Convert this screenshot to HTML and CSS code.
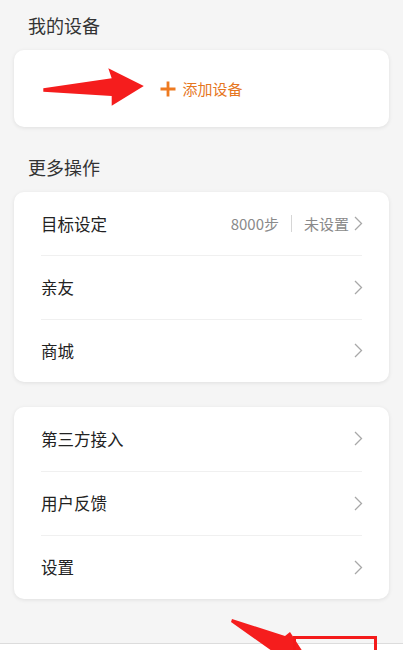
FILE: index.html
```html
<!DOCTYPE html>
<html lang="zh">
<head>
<meta charset="utf-8">
<link rel="stylesheet" href="styles.css">
</head>
<body>
<div class="page">
  <div class="section-title">我的设备</div>
  <div class="card card--add">
    <div class="add-btn">
      <svg class="plus" width="16" height="16" viewBox="0 0 16 16"><path d="M8 0.5V15.5M0.5 8H15.5" stroke="#ee7a20" stroke-width="2.8"/></svg>
      <span>添加设备</span>
    </div>
  </div>

  <div class="section-title">更多操作</div>
  <div class="card card--compact">
    <div class="row">
      <span class="label">目标设定</span>
      <span class="value">8000步</span>
      <span class="sep"></span>
      <span class="value">未设置</span>
      <svg class="chev" width="9" height="15" viewBox="0 0 9 15"><path d="M1 1L7.5 7.5L1 14" fill="none" stroke="#a8a8a8" stroke-width="1.3"/></svg>
    </div>
    <div class="row">
      <span class="label">亲友</span>
      <svg class="chev" width="9" height="15" viewBox="0 0 9 15"><path d="M1 1L7.5 7.5L1 14" fill="none" stroke="#a8a8a8" stroke-width="1.3"/></svg>
    </div>
    <div class="row">
      <span class="label">商城</span>
      <svg class="chev" width="9" height="15" viewBox="0 0 9 15"><path d="M1 1L7.5 7.5L1 14" fill="none" stroke="#a8a8a8" stroke-width="1.3"/></svg>
    </div>
  </div>

  <div class="card card--last">
    <div class="row">
      <span class="label">第三方接入</span>
      <svg class="chev" width="9" height="15" viewBox="0 0 9 15"><path d="M1 1L7.5 7.5L1 14" fill="none" stroke="#a8a8a8" stroke-width="1.3"/></svg>
    </div>
    <div class="row">
      <span class="label">用户反馈</span>
      <svg class="chev" width="9" height="15" viewBox="0 0 9 15"><path d="M1 1L7.5 7.5L1 14" fill="none" stroke="#a8a8a8" stroke-width="1.3"/></svg>
    </div>
    <div class="row">
      <span class="label">设置</span>
      <svg class="chev" width="9" height="15" viewBox="0 0 9 15"><path d="M1 1L7.5 7.5L1 14" fill="none" stroke="#a8a8a8" stroke-width="1.3"/></svg>
    </div>
  </div>

  <div class="tabbar"></div>

  <svg class="annotations" width="403" height="650" viewBox="0 0 403 650">
    <polygon fill="#f51d1d" points="43.3,88.3 111.7,78.3 108.3,68.3 143.8,86 111.7,105.7 111.7,96 43.3,91.7"/>
    <polygon fill="#f51d1d" points="232,619 285,636 290,632 316,672 264,668 272,651 231,622"/>
    <rect x="294.5" y="637.5" width="81" height="40" fill="none" stroke="#f41a1a" stroke-width="3"/>
  </svg>
</div>
</body>
</html>
```

FILE: styles.css
```css
html, body {
  margin: 0;
  padding: 0;
}
body {
  background: #f5f5f5;
  font-family: "Noto Sans CJK SC", "Noto Sans", sans-serif;
}
.page {
  position: relative;
  height: 650px;
  overflow: hidden;
  padding: 0 14px;
  box-sizing: border-box;
}
.section-title {
  font-size: 18px;
  line-height: 24px;
  color: #333;
  padding-left: 14px;
  margin: 13px 0 13px;
}
.card {
  background: #fff;
  border-radius: 10px;
  box-shadow: 0 1px 4px rgba(0, 0, 0, 0.09);
}
.card--add {
  height: 77px;
  display: flex;
  align-items: center;
  justify-content: center;
  margin-bottom: 28px;
}
.add-btn {
  display: flex;
  align-items: center;
  gap: 6px;
  color: #e6771f;
  font-size: 15px;
  line-height: 20px;
  padding-top: 1px;
}
.card--compact {
  margin-bottom: 25px;
}
.card--compact .row {
  height: 63.3px;
}
.row {
  height: 64px;
  margin: 0 27px;
  display: flex;
  align-items: center;
  box-sizing: border-box;
  font-size: 16.5px;
  color: #222;
}
.row + .row {
  border-top: 1px solid #f0f0f0;
}
.label {
  flex: 1;
}
.value {
  color: #8a8a8a;
  font-size: 15px;
}
.sep {
  width: 1px;
  height: 17px;
  background: #d6d6d6;
  margin: 0 12px;
}
.chev {
  margin-left: 5px;
  margin-right: -1px;
}
.card--last {
  margin-bottom: 44px;
}
.tabbar {
  margin: 0 -14px;
  height: 60px;
  background: #fff;
  border-top: 1px solid #dcdcdc;
}
.annotations {
  position: absolute;
  top: 0;
  left: 0;
  pointer-events: none;
}
```
